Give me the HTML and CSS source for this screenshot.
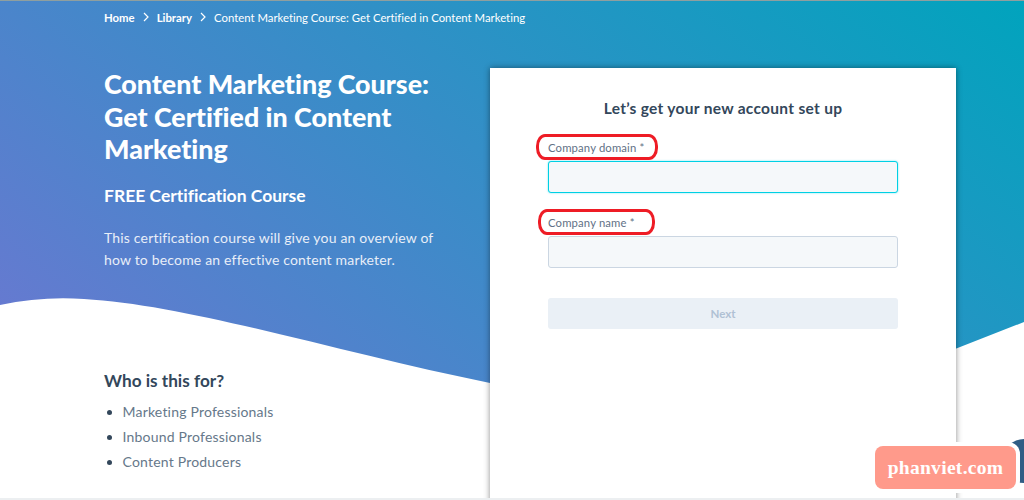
FILE: index.html
```html
<!DOCTYPE html>
<html lang="en">
<head>
    <meta charset="UTF-8">
    <meta name="viewport" content="width=device-width, initial-scale=1.0">
    <title>Content Marketing Course</title>
    <link rel="stylesheet" href="styles.css">
</head>
<body>
    <div class="page">
        <svg class="hero-bg" viewBox="0 0 1024 500" preserveAspectRatio="none" aria-hidden="true">
            <defs>
                <linearGradient id="heroGradient" gradientUnits="userSpaceOnUse" x1="0" y1="362" x2="592" y2="-361">
                    <stop offset="0" stop-color="#6a78d1"></stop>
                    <stop offset="1" stop-color="#00a4bd"></stop>
                </linearGradient>
            </defs>
            <path fill="url(#heroGradient)" d="M0 305 C28 299 56 297 84 299 C190 305 340 353 490 383 C620 408 800 412 955 349 L1024 322 L1024 0 L0 0 Z"></path>
        </svg>

        <nav class="breadcrumb">
            <a href="#">Home</a>
            <svg class="crumb-arrow" viewBox="0 0 8 10"><path d="M2 1 L6 5 L2 9"></path></svg>
            <a href="#">Library</a>
            <svg class="crumb-arrow" viewBox="0 0 8 10"><path d="M2 1 L6 5 L2 9"></path></svg>
            <span>Content Marketing Course: Get Certified in Content Marketing</span>
        </nav>

        <div class="columns">
            <div class="intro">
                <h1>Content Marketing Course: Get Certified in Content Marketing</h1>
                <h2>FREE Certification Course</h2>
                <p class="lead">This certification course will give you an overview of how to become an effective content marketer.</p>

                <h3>Who is this for?</h3>
                <ul class="audience">
                    <li>Marketing Professionals</li>
                    <li>Inbound Professionals</li>
                    <li>Content Producers</li>
                </ul>
            </div>

            <form class="signup-card">
                <h4>Let’s get your new account set up</h4>
                <div class="form-group">
                    <label for="domain"><span class="marked">Company domain *</span></label>
                    <input type="text" id="domain" class="focused">
                </div>
                <div class="form-group">
                    <label for="company"><span class="marked marked-name">Company name *</span></label>
                    <input type="text" id="company">
                </div>
                <button type="button" disabled>Next</button>
            </form>
        </div>

        <div class="chat-bubble"></div>
        <div class="watermark">phanviet.com</div>
    </div>
</body>
</html>
```

FILE: styles.css
```css
* {
    box-sizing: border-box;
}
html, body {
    margin: 0;
    height: 500px;
    overflow: hidden;
}
body {
    font-family: Lato, "Open Sans", sans-serif;
    font-variant-ligatures: none;
    background-color: white;
    color: #33475b;
}
.page {
    position: relative;
    width: 1024px;
    height: 500px;
    overflow: hidden;
    border-top: 1px solid #8f9f9f;
    border-bottom: 2px solid #eceff1;
}
.hero-bg {
    position: absolute;
    top: -1px;
    left: 0;
    width: 1024px;
    height: 500px;
}
.breadcrumb {
    position: relative;
    display: flex;
    align-items: center;
    height: 32px;
    padding-left: 104px;
    font-size: 11.35px;
    color: white;
}
.breadcrumb a {
    color: white;
    text-decoration: none;
    font-weight: 700;
}
.crumb-arrow {
    width: 8px;
    height: 10px;
    margin: 0 7px 0 7px;
    fill: none;
    stroke: white;
    stroke-width: 1.2;
}
.columns {
    position: relative;
    display: flex;
    padding-left: 104px;
    padding-top: 35px;
}
.intro {
    width: 386px;
    padding-right: 50px;
    flex-shrink: 0;
}
h1 {
    margin: 0;
    font-size: 26.8px;
    line-height: 32.6px;
    font-weight: 900;
    color: white;
}
h2 {
    margin: 18px 0 0;
    font-size: 17.5px;
    line-height: 24px;
    font-weight: 700;
    color: white;
}
.lead {
    margin: 19px -20px 0 0;
    font-size: 14px;
    line-height: 22px;
    letter-spacing: 0.18px;
    color: #e8eef8;
}
h3 {
    margin: 98px 0 0;
    font-size: 17.2px;
    line-height: 24px;
    font-weight: 700;
    color: #33475b;
}
.audience {
    margin: 6px 0 0;
    padding-left: 18.5px;
    font-size: 14px;
    line-height: 25px;
    letter-spacing: 0.2px;
    color: #66788a;
}
.audience li::marker {
    color: #33475b;
}
.signup-card {
    width: 466px;
    height: 470px;
    padding: 29px 58px 0;
    background-color: white;
    box-shadow: 0 0 6px rgba(0, 0, 0, 0.45);
}
h4 {
    margin: 0 0 18px;
    font-size: 15.5px;
    line-height: 22px;
    font-weight: 700;
    text-align: center;
    letter-spacing: 0.3px;
    color: #33475b;
}
.form-group {
    margin-bottom: 19px;
}
label {
    display: block;
    height: 24px;
    padding-top: 3px;
    font-size: 11.3px;
    line-height: 16px;
    letter-spacing: 0.15px;
    color: #5f7186;
}
.marked {
    position: relative;
    display: inline-block;
}
.marked::after {
    content: "";
    position: absolute;
    top: -6px;
    bottom: -4px;
    left: -12px;
    right: -14px;
    border: 3px solid #ee1c25;
    border-radius: 9px / 12px;
}
.marked-name::after {
    left: -10px;
    right: -20px;
}
input {
    display: block;
    width: 100%;
    height: 32px;
    background-color: #f5f8fa;
    border: 1px solid #cbd6e2;
    border-radius: 3px;
}
input.focused {
    border-color: #00d0e4;
    box-shadow: 0 0 2px rgba(0, 208, 228, 0.6);
}
button {
    display: block;
    width: 100%;
    height: 31px;
    margin-top: 30px;
    background-color: #eaf0f6;
    border: none;
    border-radius: 3px;
    font-family: inherit;
    font-size: 11.5px;
    font-weight: 700;
    color: #b0c1d4;
}
.chat-bubble {
    position: absolute;
    left: 1002px;
    top: 438px;
    width: 44px;
    height: 44px;
    border-radius: 50%;
    background-color: #2f5d85;
}
.watermark {
    position: absolute;
    left: 875px;
    top: 445px;
    width: 141px;
    height: 43px;
    background-color: #ff9a8b;
    border-radius: 8px;
    box-shadow: 0 0 0 4px white;
    font-family: "Liberation Serif", serif;
    font-size: 19.5px;
    font-weight: 700;
    line-height: 43px;
    text-align: center;
    letter-spacing: 0.3px;
    color: white;
}
```
